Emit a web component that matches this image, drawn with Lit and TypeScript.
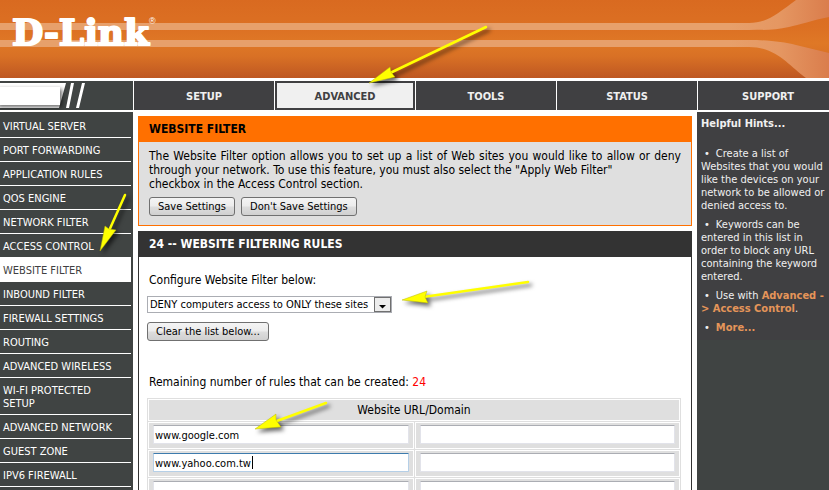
import { LitElement, html, svg, css } from "lit";
import { customElement, property, state } from "lit/decorators.js";
import { classMap } from "lit/directives/class-map.js";

const TABS = ["SETUP", "ADVANCED", "TOOLS", "STATUS", "SUPPORT"];

const SECTIONS = [
  "VIRTUAL SERVER",
  "PORT FORWARDING",
  "APPLICATION RULES",
  "QOS ENGINE",
  "NETWORK FILTER",
  "ACCESS CONTROL",
  "WEBSITE FILTER",
  "INBOUND FILTER",
  "FIREWALL SETTINGS",
  "ROUTING",
  "ADVANCED WIRELESS",
  "WI-FI PROTECTED SETUP",
  "ADVANCED NETWORK",
  "GUEST ZONE",
  "IPV6 FIREWALL",
];

const fontStack = css`"DejaVu Sans Condensed", "DejaVu Sans", sans-serif`;

@customElement("brand-header")
export class BrandHeader extends LitElement {
  static styles = css`
    :host {
      display: block;
      position: relative;
      height: 78px;
      overflow: hidden;
      background: linear-gradient(#d96a20, #dc7023 35%, #df7826 55%, #d97125 72%, #be5722);
    }
    .stripe {
      position: absolute;
      left: 0;
      right: 100px;
      height: 7px;
      background: #e7a06b;
    }
    .upper { top: 23px; }
    .lower { top: 40px; }
    .flare {
      position: absolute;
      right: 0;
      top: 0;
    }
    .logo {
      position: absolute;
      left: 0;
      top: 0;
    }
    .word {
      font: bold 36px "DejaVu Serif", serif;
      fill: #fff;
      stroke: #fff;
      stroke-width: 2px;
      stroke-linejoin: round;
    }
    .mark {
      font: 9px "Liberation Sans", sans-serif;
      stroke: none;
    }
  `;

  render() {
    return html`
      <div class="stripe upper"></div>
      <div class="stripe lower"></div>
      <svg class="flare" width="100" height="78" viewBox="0 0 100 78" aria-hidden="true">
        <defs>
          <linearGradient id="fade" x1="0" x2="1">
            <stop offset="0" stop-color="#e7a06b" />
            <stop offset="0.5" stop-color="#e59762" />
            <stop offset="1" stop-color="#da7d4c" />
          </linearGradient>
        </defs>
        <path fill="url(#fade)" d="M0 23H20C38 23 48 14 67 0H100V17C84 20 70 25 60 27C47 30 35 30 20 30H0Z" />
        <path fill="url(#fade)" d="M0 40H20C40 40 54 42 67 45L100 53V78H77C60 66 48 47 20 47H0Z" />
      </svg>
      <svg class="logo" width="180" height="78" role="img" aria-label="D-Link">
        <text class="word" x="12" y="45">D-Link<tspan class="mark" dy="-21">®</tspan></text>
      </svg>
    `;
  }
}

@customElement("main-tabs")
export class MainTabs extends LitElement {
  @property() current = "";

  static styles = css`
    :host { display: block; font-family: ${fontStack}; }
    .bar {
      display: grid;
      grid-template-columns: 133px repeat(4, minmax(0, 1fr)) 131px;
      gap: 1px;
      height: 29px;
    }
    .model { background: #404443; overflow: hidden; }
    .tab {
      display: flex;
      align-items: center;
      justify-content: center;
      padding-top: 2px;
      background: #404042;
      color: #f0f0f0;
      font-size: 11px;
      font-weight: bold;
      text-decoration: none;
    }
    .tab:last-child { padding-left: 9px; }
    .on {
      background: #f0f0f0;
      color: #404042;
      border: 2px solid #404042;
    }
  `;

  render() {
    return html`<nav class="bar">
      <svg class="model" width="133" height="29" aria-hidden="true">
        <defs>
          <filter id="soft" x="-20%" y="-40%" width="150%" height="200%">
            <feDropShadow dx="2" dy="2" stdDeviation="2" flood-color="#000" flood-opacity="0.6" />
          </filter>
        </defs>
        <path fill="#fff" d="M0 2H66L59 27H0Z" />
        <path fill="#fff" filter="url(#soft)" d="M-4 6H60V24H-4Z" />
        <path fill="#fff" d="M71 2H74L69 27H66ZM82 2H85L79 27H76Z" />
      </svg>
      ${TABS.map(
        (t) => html`<a href="#" class=${classMap({ tab: true, on: t === this.current })}>${t}</a>`
      )}
    </nav>`;
  }
}

@customElement("side-menu")
export class SideMenu extends LitElement {
  @property() current = "";

  static styles = css`
    :host {
      display: block;
      padding: 2px 2px 0 0;
      background: #404443;
      font-family: ${fontStack};
    }
    .item {
      display: block;
      padding: 6px 10px 4px 3px;
      border-bottom: 1px solid #fff;
      color: #fff;
      font-size: 11px;
      line-height: 13px;
      text-decoration: none;
    }
    .on { background: #fff; color: #404042; }
  `;

  render() {
    return html`<nav>
      ${SECTIONS.map(
        (s) => html`<a href="#" class=${classMap({ item: true, on: s === this.current })}>${s}</a>`
      )}
    </nav>`;
  }
}

@customElement("help-hints")
export class HelpHints extends LitElement {
  static styles = css`
    :host {
      display: block;
      background: #404443;
      color: #f0f0f0;
      font: 11px/13px ${fontStack};
    }
    .box { background: #404042; padding: 5px 4px 6px; white-space: nowrap; }
    .title { margin: 0 0 17px; font-size: 11px; line-height: 13px; }
    .list { margin: 0; padding: 0; list-style: none; display: grid; gap: 6px; }
    .hint::before { content: "•"; margin: 0 6px 0 3px; }
    .link { color: #e59559; font-weight: bold; text-decoration: none; }
  `;

  render() {
    return html`<aside class="box">
      <h2 class="title">Helpful Hints...</h2>
      <ul class="list">
        <li class="hint">Create a list of<br />Websites that you would<br />like the devices on your<br />network to be allowed or<br />denied access to.</li>
        <li class="hint">Keywords can be<br />entered in this list in<br />order to block any URL<br />containing the keyword<br />entered.</li>
        <li class="hint">Use with <a class="link" href="#">Advanced -<br />&gt; Access Control</a>.</li>
        <li class="hint"><a class="link" href="#">More...</a></li>
      </ul>
    </aside>`;
  }
}

@customElement("filter-page")
export class FilterPage extends LitElement {
  @state() rows = [
    ["www.google.com", ""],
    ["www.yahoo.com.tw", ""],
    ["", ""],
  ];

  static styles = css`
    :host {
      display: flex;
      flex-direction: column;
      gap: 5px;
      padding: 4px 5px;
      min-width: 0;
      color: #000;
      font: 12px/14px ${fontStack};
    }
    .panel { border: 1px solid #ff7000; background: #dfdfdf; }
    .heading {
      margin: 0;
      padding: 0 10px;
      background: #ff7000;
      font-size: 12px;
      line-height: 25px;
    }
    .intro { padding: 7px 10px 9px; }
    .text { margin: 0; text-align: justify; }
    .buttons { display: flex; gap: 6px; margin-top: 6px; }
    .rules { border-color: #333; background: #fff; }
    .rules .heading { background: #333; color: #fff; }
    .form {
      display: flex;
      flex-direction: column;
      align-items: flex-start;
      padding: 16px 10px 16px 8px;
    }
    .caption { padding-left: 2px; }
    .button {
      height: 19px;
      padding: 0 8px;
      border: 1px solid #707070;
      border-radius: 3px;
      background: linear-gradient(#f4f4f4, #ececec 48%, #dddddd 52%, #d0d0d0);
      color: #000;
      font: 11px/13px ${fontStack};
      white-space: nowrap;
    }
    .picker { position: relative; margin: 9px 0; }
    .select {
      appearance: none;
      display: block;
      width: 245px;
      height: 17px;
      padding: 0 20px 0 2px;
      border: 1px solid #abadb3;
      border-radius: 0;
      background: #fff;
      color: #000;
      font: 11px/15px ${fontStack};
    }
    .drop {
      position: absolute;
      right: 1px;
      top: 1px;
      pointer-events: none;
    }
    .remaining { margin-top: 34px; }
    .count { color: #f00; }
    .table {
      align-self: stretch;
      margin: 9px 0 0;
      border-spacing: 1px;
      table-layout: fixed;
      background: #dfdfdf;
    }
    .cell { padding: 2px 4px 4px; border: 1px solid #fff; }
    .head { padding: 3px 0; border: 1px solid #fff; font-weight: normal; }
    .url {
      display: block;
      box-sizing: border-box;
      width: 100%;
      height: 19px;
      padding: 1px 1px 0;
      border: 1px solid #e2e3ea;
      border-top-color: #abadb3;
      border-radius: 1px;
      background: #fff;
      color: #000;
      outline: none;
      font: 11px/13px ${fontStack};
    }
    .active {
      border-color: #b5cfe7;
      border-top-color: #3d7bad;
      background: linear-gradient(#000, #000) 98px 2px / 1px 13px no-repeat #fff;
    }
  `;

  render() {
    return html`
      <section class="panel">
        <h1 class="heading">WEBSITE FILTER</h1>
        <div class="intro">
          <p class="text">
            The Website Filter option allows you to set up a list of Web sites you would like to allow or deny
            through your network. To use this feature, you must also select the "Apply Web Filter"<br />
            checkbox in the Access Control section.
          </p>
          <div class="buttons">
            <button class="button">Save Settings</button>
            <button class="button">Don't Save Settings</button>
          </div>
        </div>
      </section>
      <section class="panel rules">
        <h2 class="heading">24 -- WEBSITE FILTERING RULES</h2>
        <div class="form">
          <label class="caption" for="mode">Configure Website Filter below:</label>
          <div class="picker">
            <select class="select" id="mode">
              <option>DENY computers access to ONLY these sites</option>
              <option>ALLOW computers access to ONLY these sites</option>
            </select>
            <svg class="drop" width="17" height="15" aria-hidden="true">
              <rect x="0.5" y="0.5" width="16" height="14" fill="#ececec" stroke="#707070" />
              <path d="M5 8H12L8.500 11.500Z" fill="#000" />
            </svg>
          </div>
          <button class="button">Clear the list below...</button>
          <div class="caption remaining">
            Remaining number of rules that can be created: <span class="count">24</span>
          </div>
          <table class="table">
            <thead>
              <tr><th class="head" colspan="2">Website URL/Domain</th></tr>
            </thead>
            <tbody>
              ${this.rows.map(
                (row, r) => html`<tr>
                  ${row.map(
                    (v, c) => html`<td class="cell">
                      <input
                        class=${classMap({ url: true, active: r === 1 && c === 0 })}
                        aria-label="Website URL/Domain ${r * 2 + c + 1}"
                        .value=${v}
                      />
                    </td>`
                  )}
                </tr>`
              )}
            </tbody>
          </table>
        </div>
      </section>
    `;
  }
}

const ARROWS = [
  { shaft: "M486 27L388 74", head: "M369 83L390 67L391 72L395 77Z" },
  { shaft: "M125 195L108 233", head: "M100 251L105 226L109 229L116 230Z" },
  { shaft: "M528 282L423 297", head: "M402 300L427 291L425 297L428 303Z" },
  { shaft: "M326 403L274 422", head: "M255 429L276 414L276 420L281 427Z" },
];

@customElement("app-root")
export class AppRoot extends LitElement {
  static styles = css`
    :host {
      display: flex;
      flex-direction: column;
      position: relative;
      height: 100vh;
      overflow: hidden;
      background: #fff;
    }
    .tabs { margin: 3px 0 2px; flex: none; }
    .banner { flex: none; }
    .body {
      flex: 1;
      min-height: 0;
      display: grid;
      grid-template-columns: 133px minmax(0, 1fr) 132px;
    }
    .arrows {
      position: absolute;
      left: 0;
      top: 0;
      pointer-events: none;
      filter: drop-shadow(3px 3px 2px rgba(0, 0, 0, 0.6));
    }
    .shaft { stroke: #ff0; stroke-width: 2.5px; stroke-linecap: round; }
    .tip { fill: #ff0; stroke: #b8b800; stroke-width: 0.5px; }
  `;

  render() {
    return html`
      <brand-header class="banner"></brand-header>
      <main-tabs class="tabs" current="ADVANCED"></main-tabs>
      <div class="body">
        <side-menu current="WEBSITE FILTER"></side-menu>
        <filter-page></filter-page>
        <help-hints></help-hints>
      </div>
      <svg class="arrows" width="560" height="450" aria-hidden="true">
        ${ARROWS.map((a) => svg`<path class="shaft" d=${a.shaft} /><path class="tip" d=${a.head} />`)}
      </svg>
    `;
  }
}
